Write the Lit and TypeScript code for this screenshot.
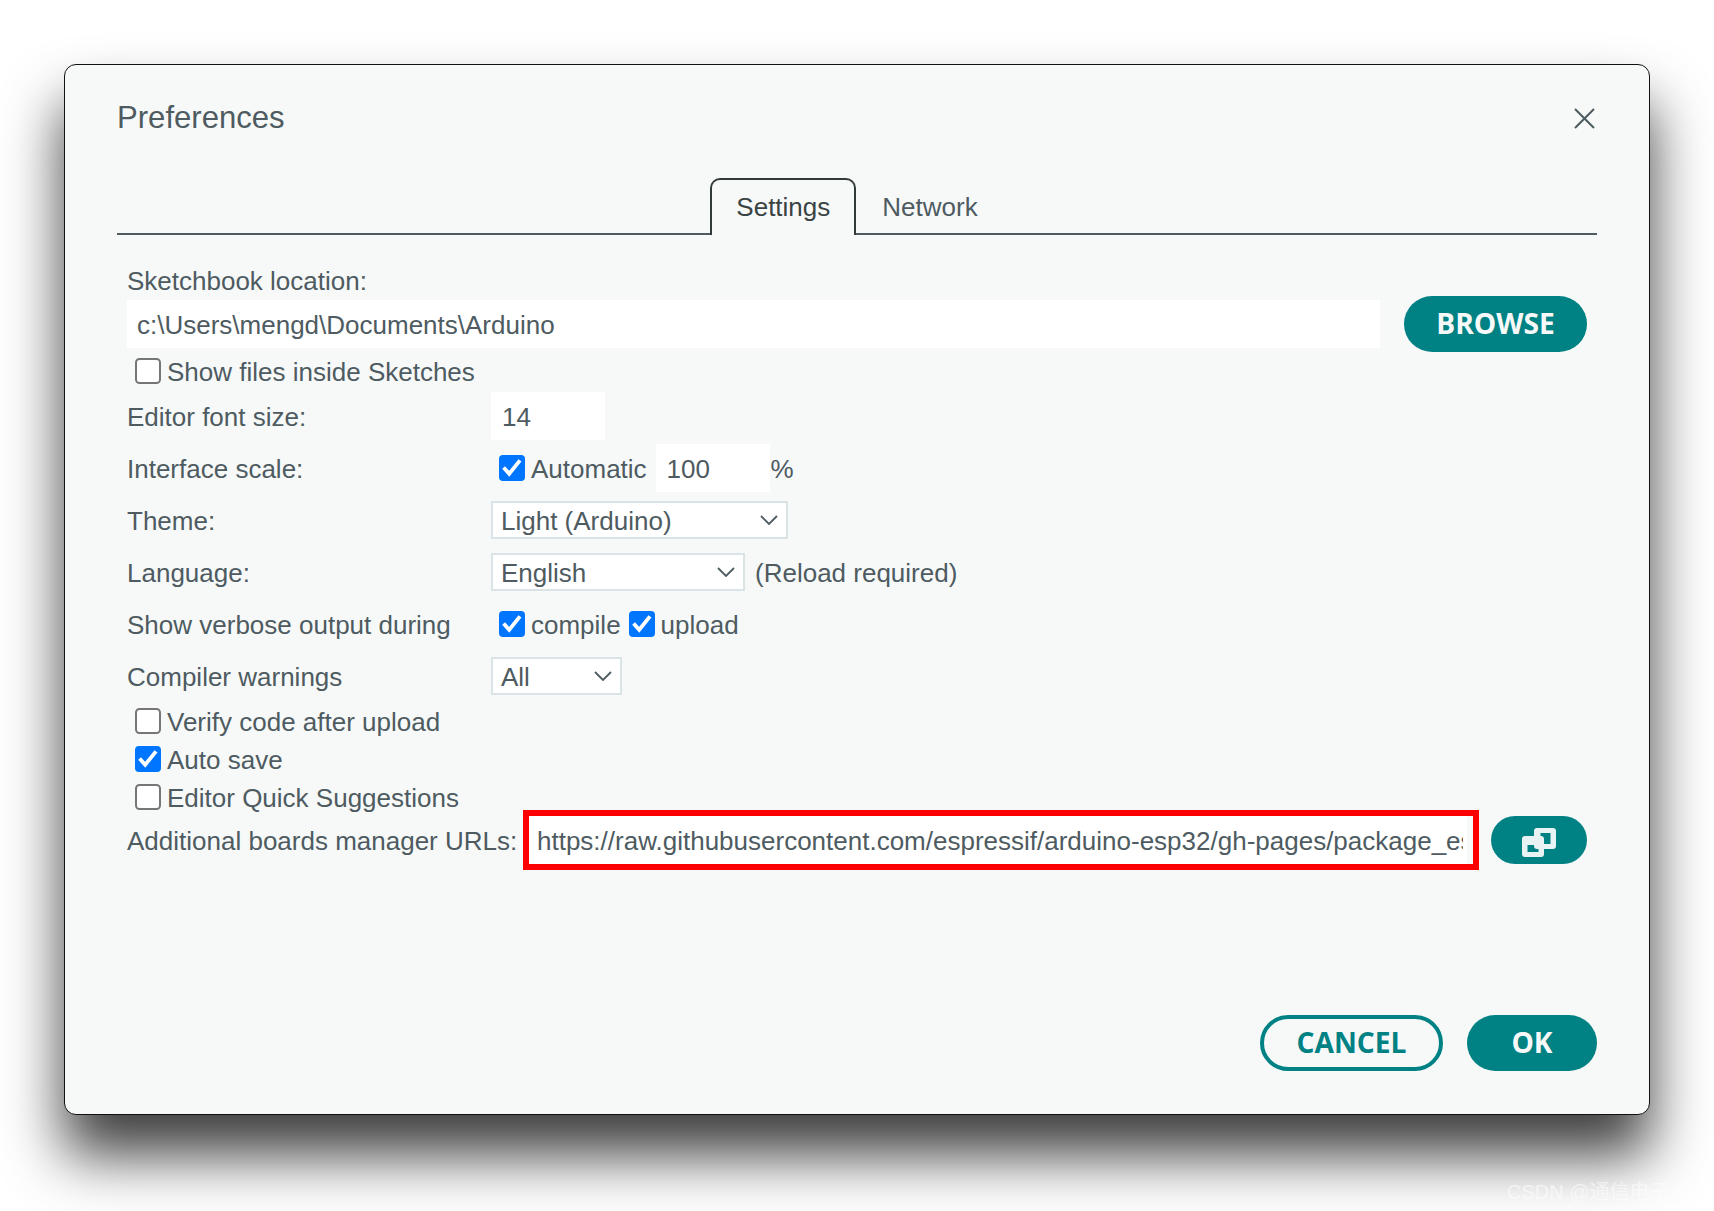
import { LitElement, html, css, svg } from "lit";
import { customElement } from "lit/decorators.js";

const chevron = html`<svg class="chev" width="18" height="10" viewBox="0 0 18 10"><path d="M1 1l8 8 8-8" fill="none" stroke="#4e5b61" stroke-width="1.8"/></svg>`;
const tick = svg`<path d="M4.6 12.6l5.6 6.2L21 5.4" fill="none" stroke="#fff" stroke-width="3.8"/>`;

@customElement("app-root")
export class AppRoot extends LitElement {
  static styles = css`
    :host { display: block; width: 1714px; height: 1211px; box-sizing: border-box; padding: 64px; background: #fff; overflow: hidden; position: relative; font: 26px/30px "Liberation Sans", Arial, sans-serif; color: #4e5b61; }
    .dialog { width: 1586px; height: 1051px; box-sizing: border-box; background: #f7f9f9; border: 1px solid #111; border-radius: 12px; padding: 33px 52px 43px; display: flex; flex-direction: column; box-shadow: 0 40px 58px rgba(0,0,0,.76); }
    .head { height: 40px; display: flex; align-items: center; justify-content: space-between; }
    .title { font-size: 31.1px; line-height: 40px; }
    .close { display: block; margin: 0 2px 0 0; }
    .tabs { margin-top: 40px; height: 57px; box-sizing: border-box; border-bottom: 2px solid #4e5b61; display: flex; justify-content: center; }
    .tab { height: 57px; box-sizing: border-box; padding: 14px 26px 0; font-size: 26px; }
    .tab.active { padding: 12px 24px 0; border: 2px solid #333a3a; border-bottom: 0; border-radius: 10px 10px 0 0; background: #f7f9f9; color: #3a4344; }
    .body { padding: 31px 10px 0; flex: 1; display: flex; flex-direction: column; }
    .sketch { margin-top: 4px; display: flex; gap: 24px; align-items: center; height: 48px; }
    .input { background: #fff; height: 48px; box-sizing: border-box; padding: 2px 10px 0 10px; display: flex; align-items: center; white-space: nowrap; }
    .grow { flex: 1; }
    .num { width: 114px; padding-left: 11px; }
    .btn { box-sizing: border-box; border-radius: 28px; font: 700 28.2px/1 "Open Sans", sans-serif; display: flex; align-items: center; justify-content: center; background: #008184; color: #f7f9f9; height: 56px; padding-bottom: 2px; }
    .browse { width: 183px; }
    .opt { height: 38px; display: flex; align-items: center; gap: 6px; margin-left: 8px; }
    .first { margin: 4px 0 2px 8px; }
    .box { width: 26px; height: 26px; display: block; flex: none; }
    .rows { display: flex; flex-direction: column; gap: 4px; margin-bottom: 2px; }
    .row { height: 48px; display: grid; grid-template-columns: 364px 1fr; align-items: center; }
    .lbl, .opt span, .check span, .note, .pct, .urls-label { display: block; padding-top: 2px; }
    .cell { display: flex; align-items: center; }
    .check { display: flex; align-items: center; gap: 6px; margin-left: 8px; }
    .select { height: 38px; box-sizing: border-box; border: 2px solid #dae3e5; background: #fff; padding: 2px 8px 0 8px; display: flex; align-items: center; justify-content: space-between; }
    .chev { display: block; margin-top: -2px; }
    .w-theme { width: 297px; }
    .w-lang { width: 254px; }
    .w-all { width: 131px; }
    .note { margin-left: 10px; }
    .pct { margin-left: 1px; }
    .auto { margin-right: 9px; }
    .gap { margin-left: 8px; }
    .urls { display: flex; height: 48px; align-items: center; }
    .urls-label { width: 402px; flex: none; }
    .url { width: 944px; height: 48px; flex: none; box-sizing: border-box; background: #fff; border-right: 6px solid #f7f9f9; outline: 6px solid #f00; padding: 2px 4px 0 8px; display: flex; align-items: center; overflow: hidden; white-space: nowrap; }
    .url span { display: block; overflow: hidden; }
    .copy { width: 96px; height: 48px; margin-left: 18px; border-radius: 24px; background: #008184; display: flex; align-items: center; justify-content: center; }
    .copy svg { display: block; margin-top: 4px; }
    .foot { display: flex; justify-content: flex-end; gap: 24px; }
    .cancel { width: 183px; background: none; border: 4px solid #008184; color: #008184; }
    .ok { width: 130px; }
    .mark { position: absolute; left: 1507px; top: 1177px; font: 20px/30px "Liberation Sans", "Noto Sans CJK SC", sans-serif; color: rgba(255,255,255,.55); white-space: nowrap; }
  `;

  private box(on: boolean) {
    return html`<svg class="box" viewBox="0 0 26 26">
      ${on
        ? svg`<rect width="26" height="26" rx="4" fill="#0075ff"/>${tick}`
        : svg`<rect x="1" y="1" width="24" height="24" rx="3.5" fill="#fff" stroke="#767676" stroke-width="2"/>`}
    </svg>`;
  }

  render() {
    return html`
      <div class="dialog">
        <div class="head">
          <div class="title">Preferences</div>
          <svg class="close" width="21" height="21" viewBox="0 0 21 21"><path d="M1 1l19 19M20 1L1 20" stroke="#4e5b61" stroke-width="2" fill="none"/></svg>
        </div>
        <div class="tabs">
          <div class="tab active">Settings</div>
          <div class="tab">Network</div>
        </div>
        <div class="body">
          <div>Sketchbook location:</div>
          <div class="sketch">
            <div class="input grow">c:\\Users\\mengd\\Documents\\Arduino</div>
            <div class="btn browse">BROWSE</div>
          </div>
          <div class="opt first">${this.box(false)}<span>Show files inside Sketches</span></div>
          <div class="rows">
            <div class="row"><div class="lbl">Editor font size:</div><div class="cell"><div class="input num">14</div></div></div>
            <div class="row"><div class="lbl">Interface scale:</div><div class="cell">
              <div class="check auto">${this.box(true)}<span>Automatic</span></div>
              <div class="input num">100</div><span class="pct">%</span></div></div>
            <div class="row"><div class="lbl">Theme:</div><div class="cell"><div class="select w-theme"><span>Light (Arduino)</span>${chevron}</div></div></div>
            <div class="row"><div class="lbl">Language:</div><div class="cell"><div class="select w-lang"><span>English</span>${chevron}</div><span class="note">(Reload required)</span></div></div>
            <div class="row"><div class="lbl">Show verbose output during</div><div class="cell">
              <div class="check">${this.box(true)}<span>compile</span></div>
              <div class="check gap">${this.box(true)}<span>upload</span></div></div></div>
            <div class="row"><div class="lbl">Compiler warnings</div><div class="cell"><div class="select w-all"><span>All</span>${chevron}</div></div></div>
          </div>
          <div class="opt">${this.box(false)}<span>Verify code after upload</span></div>
          <div class="opt">${this.box(true)}<span>Auto save</span></div>
          <div class="opt">${this.box(false)}<span>Editor Quick Suggestions</span></div>
          <div class="urls">
            <div class="urls-label">Additional boards manager URLs:</div>
            <div class="url"><span>https://raw.githubusercontent.com/espressif/arduino-esp32/gh-pages/package_esp32_index.json</span></div>
            <div class="copy">
              <svg width="34" height="29" viewBox="0 0 34 29"><path fill="#eaf3f3" fill-rule="evenodd" d="M15 0h16a3 3 0 0 1 3 3v15a3 3 0 0 1-3 3H15a3 3 0 0 1-3-3V3a3 3 0 0 1 3-3zM18.5 5v11h10V5z"/><path fill="#eaf3f3" fill-rule="evenodd" d="M3 8h16a3 3 0 0 1 3 3v15a3 3 0 0 1-3 3H3a3 3 0 0 1-3-3V11a3 3 0 0 1 3-3zM5.5 17v7h11v-7z"/></svg>
            </div>
          </div>
          <div class="grow"></div>
        </div>
        <div class="foot">
          <div class="btn cancel">CANCEL</div>
          <div class="btn ok">OK</div>
        </div>
      </div>
      <div class="mark">CSDN @通信电子</div>
    `;
  }
}
